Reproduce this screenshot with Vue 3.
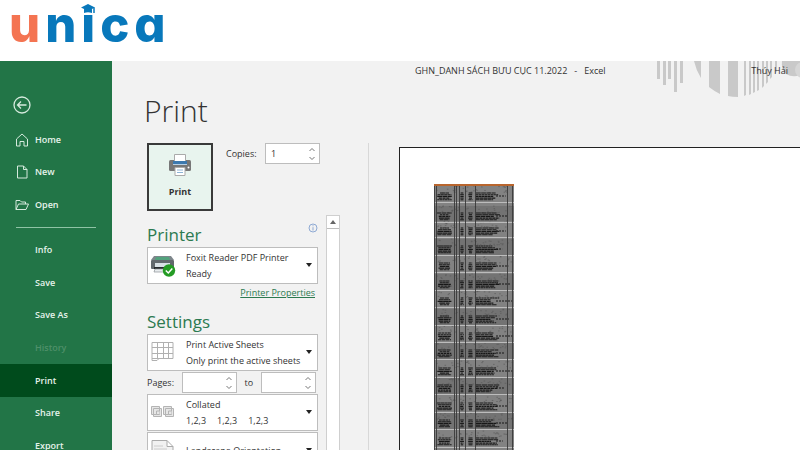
<script setup>
import { ref } from 'vue'

const copies = ref('1')
const fromPage = ref('')
const toPage = ref('')

const topLinks = [
  { label: 'Home', icon: 'M1.5 6 7 1l5.500 5v7H9V8.500H5V13H1.500z' },
  { label: 'New', icon: 'M2.500 1h6l3.500 3.500V13H2.500zM8.500 1v3.500H12' },
  { label: 'Open', icon: 'M1 11.500V2.500h4l1.500 1.500h4V6M1 11.500 3.500 6H13.500l-2.500 5.500z' },
]
const links = ['Info', 'Save', 'Save As', 'History', 'Print', 'Share', 'Export']

// Deterministic noise for the miniature sheet preview.
let seed = 7
const rand = () => (seed = (seed * 16807) % 2147483647) / 2147483647

const bands = [18, 38, 53, 71, 88, 106, 123, 141, 158, 175, 193, 210, 228, 245, 263]
const columns = [
  { x: 3, w: 15 },
  { x: 26, w: 4 },
  { x: 34, w: 5 },
  { x: 42, w: 24 },
]
const marks = []
const specks = []
for (const y of bands) {
  for (let line = 0; line < 5; line++) {
    for (const c of columns) {
      const w = c.w * (0.6 + rand() * 0.4)
      const x = c.w > 20 ? c.x : c.x + (c.w - w) / 2
      marks.push({ x, y: y - 9 + line * 1.7, w, dash: `${2 + rand() * 4} ${0.2 + rand() * 0.4}` })
    }
  }
  marks.push({ x: 62, y: y - 6, w: 6 + rand() * 11, dash: '2 1' })
  for (let i = 0; i < 32; i++) specks.push({ x: 2 + rand() * 76, y: y - 16 + rand() * 7 })
}
</script>

<template>
  <div class="page">
    <header class="brand">
      <a class="logo" href="#" aria-label="unica">
        <span class="warm">u</span><span>n</span><span class="capped">i<svg class="cap" width="14" height="11" viewBox="0 0 14 11" aria-hidden="true">
          <rect width="14" height="11" fill="#fff" />
          <path d="M0 3.500 7 0l7 3.500L7 7zM3 5 7 7l4-2v4Q7 7.500 3 9z" fill="#0878bb" />
          <path d="M13 3.500V9" stroke="#0878bb" stroke-width="1.500" />
        </svg></span><span>c</span><span>a</span>
      </a>
    </header>

    <div class="backstage">
      <nav class="sidebar">
        <button class="back" aria-label="Back">
          <svg width="18" height="18" viewBox="0 0 18 18"><circle cx="9" cy="9" r="8" /><path d="M13.500 9h-9M8 5.500 4.500 9 8 12.500" /></svg>
        </button>
        <div class="top-links">
          <a v-for="l in topLinks" :key="l.label" href="#">
            <svg width="14" height="14" viewBox="0 0 14 14"><path :d="l.icon" /></svg>{{ l.label }}
          </a>
        </div>
        <hr />
        <div class="links">
          <a v-for="l in links" :key="l" href="#" :class="{ active: l === 'Print', muted: l === 'History' }">{{ l }}</a>
        </div>
      </nav>

      <main class="main">
        <svg class="ornament" width="150" height="40" viewBox="0 0 150 40" aria-hidden="true">
          <g fill="#c9c9c9">
            <path d="M7 0h3v18H7zM13 0h3v24h-3zM18 0h3v18h-3zM24 0h3v31h-3zM30 0h3v22h-3z" />
            <path d="M44 0h7v17Q46 9 44 0zM59 0h11v33Q64 30 59 26zM78 0h10v36Q82 36 78 35z" />
            <path d="M94 0h2v34l-2 1zM99 0h2v33l-2 1zM103 0h2v31l-2 1zM107 0h2v29l-2 1zM112 0h2v25l-2 2zM116 0h2v21l-2 2zM120 0h2v16l-2 2zM125 0h2v10l-2 3z" />
            <path d="M132 0h18v14Q143 17 136 13 131 8 132 0z" />
          </g>
          <circle cx="153" cy="9" r="8" fill="#d6d6d6" />
        </svg>
        <div class="titlebar">
          <span class="doc"><span>GHN_DANH SÁCH BƯU CỤC 11.2022</span><span>-</span><span>Excel</span></span>
          <span class="user">Thúy Hải</span>
        </div>
        <h1>Print</h1>

        <div class="work">
          <section class="options">
            <div class="print-row">
              <button class="print">
                <svg width="24" height="22" viewBox="0 0 24 22" aria-hidden="true">
                  <rect x="1" y="6" width="22" height="11" rx="1.500" fill="#777" />
                  <path d="M6.500.5h11V9h-11z" fill="#fff" stroke="#aaa" />
                  <path d="M5 7h14v4H5z" fill="#3c78ae" />
                  <path d="M5 10.500h14" stroke="#b9d0e5" />
                  <path d="M7 13.500h10v8H7z" fill="#fff" stroke="#aaa" />
                  <path d="M9 16h6M9 18.500h6" stroke="#8db4d5" />
                  <circle cx="20.500" cy="13.500" r="1" fill="#fff" />
                </svg>
                Print
              </button>
              <label class="copies" for="copies">Copies:</label>
              <span class="spin"><input id="copies" v-model="copies" /><svg width="8" height="14" viewBox="0 0 8 14"><path d="M1.500 4 4 1.500 6.500 4M1.500 10 4 12.500 6.500 10" /></svg></span>
            </div>

            <div class="settings">
              <div class="fields">
                <div class="heading-row">
                  <h2>Printer</h2>
                  <svg class="info" width="10" height="10" viewBox="0 0 10 10" aria-hidden="true"><circle cx="5" cy="5" r="4" /><path d="M5 4.200V7.500M5 2.300v1" /></svg>
                </div>
                <div class="combo">
                  <select aria-label="Printer"><option>Foxit Reader PDF Printer</option></select>
                  <svg class="glyph" width="26" height="24" viewBox="0 0 26 24" aria-hidden="true">
                    <path d="M4 3h17l3 4H1z" fill="#7d868b" />
                    <path d="M6 4h13l1 3H5z" fill="#53a27d" />
                    <rect x="1" y="7" width="23" height="9" rx="1" fill="#62686d" />
                    <path d="M5 10h15v4H5z" fill="#d8e0e5" />
                    <path d="M4 14h15v2H4z" fill="#25292c" />
                    <path d="M5 16h13v3H4z" fill="#e8ecee" stroke="#8b9195" stroke-width=".7" />
                    <circle cx="19" cy="17.500" r="6.200" fill="#249b24" />
                    <path d="m15.800 17.500 2.500 2.500 4-4.500" fill="none" stroke="#fff" stroke-width="1.500" />
                  </svg>
                  <span class="detail">Ready</span>
                  <i class="arrow"></i>
                </div>
                <a class="properties" href="#">Printer Properties</a>

                <h2 class="settings-title">Settings</h2>
                <div class="combo">
                  <select aria-label="What to print"><option>Print Active Sheets</option></select>
                  <svg class="glyph" width="26" height="24" viewBox="0 0 26 24" aria-hidden="true">
                    <path d="M2 2.500h21v16H9l-2 2H2zM2 7.500h21M2 13.500h21M7.500 2.500v16M13.500 2.500v16M18.500 2.500v16M2 18.500h7" fill="#fff" stroke="#b0b0b0" />
                  </svg>
                  <span class="detail">Only print the active sheets</span>
                  <i class="arrow"></i>
                </div>
                <div class="pages">
                  <label for="from-page">Pages:</label>
                  <span class="spin"><input id="from-page" v-model="fromPage" /><svg width="8" height="14" viewBox="0 0 8 14"><path d="M1.500 4 4 1.500 6.500 4M1.500 10 4 12.500 6.500 10" /></svg></span>
                  <label for="to-page">to</label>
                  <span class="spin"><input id="to-page" v-model="toPage" /><svg width="8" height="14" viewBox="0 0 8 14"><path d="M1.500 4 4 1.500 6.500 4M1.500 10 4 12.500 6.500 10" /></svg></span>
                </div>
                <div class="combo">
                  <select aria-label="Collation"><option>Collated</option></select>
                  <svg class="glyph" width="26" height="24" viewBox="0 0 26 24" aria-hidden="true">
                    <g fill="#e6e6e6" stroke="#b4b4b4">
                      <path d="M1.500 6.500h8v8h-8zM3.500 8.500h8v8h-8zM13.500 6.500h8v8h-8zM15.500 8.500h8v8h-8z" />
                      <path d="M9.500 11h-3v3.500h3M21.500 11h-3v3.500h3" />
                    </g>
                  </svg>
                  <span class="detail runs"><span>1,2,3</span><span>1,2,3</span><span>1,2,3</span></span>
                  <i class="arrow"></i>
                </div>
                <div class="combo single">
                  <select aria-label="Orientation"><option>Landscape Orientation</option></select>
                  <svg class="glyph" width="26" height="24" viewBox="0 0 26 24" aria-hidden="true">
                    <path d="M2 2.500h15l6 6V22H2zM17 2.500v6h6" fill="#f1f1f1" stroke="#aaa" />
                    <path d="M4 8h9M4 11h13M4 14h15" stroke="#ccc" />
                  </svg>
                  <i class="arrow"></i>
                </div>
              </div>
              <div class="scroll"><button aria-label="Scroll up"><i></i></button></div>
            </div>
          </section>

          <section class="preview">
            <svg class="sheet" width="80" height="266" viewBox="0 0 80 266" role="img" aria-label="Sheet preview">
              <rect width="80" height="266" fill="#828282" />
              <rect v-for="(y, i) in bands" :key="'b' + y" x="0" :y="y - 16" width="80" height="16" :fill="i % 2 ? '#737373' : '#828282'" />
              <path v-for="(s, i) in specks" :key="'s' + i" :d="`M${s.x} ${s.y}h1.500`" stroke="#555" stroke-width=".6" />
              <path v-for="(m, i) in marks" :key="'m' + i" :d="`M${m.x} ${m.y}h${m.w}`" stroke="#181818" stroke-width="1.100" :stroke-dasharray="m.dash" />
              <path v-for="y in bands" :key="'l' + y" :d="`M0 ${y}.500h80`" stroke="#ccc" stroke-width=".8" />
              <path d="M.5 0v266M2.500 0v266M20.500 0v266M22.500 0v266M25.500 0v266M31.500 0v266M41.500 0v266M73.500 0v266M78.500 0v266" stroke="#393939" stroke-width=".9" />
              <rect width="80" height="2" fill="#b8652d" />
            </svg>
          </section>
        </div>
      </main>
    </div>
  </div>
</template>

<style>
body {
  margin: 0;
  background: #fff;
}
</style>

<style scoped>
* {
  box-sizing: border-box;
}
.page {
  height: 100vh;
  overflow: hidden;
  display: flex;
  flex-direction: column;
  font: 9px/16px "Open Sans", "Noto Sans", sans-serif;
  color: #333;
}
button,
input,
select {
  font: inherit;
  color: inherit;
  margin: 0;
  padding: 0;
  border-radius: 0;
}
a {
  color: inherit;
  text-decoration: none;
}
.brand {
  flex: none;
  height: 61px;
  padding-left: 9px;
}
.logo {
  display: inline-flex;
  gap: 5px;
  font: 800 49px/50px Inter, sans-serif;
  font-feature-settings: "cv11";
  color: #0878bb;
}
.logo .warm {
  color: #f47452;
}
.capped {
  position: relative;
}
.cap {
  position: absolute;
  top: 4px;
  left: 0;
}
.backstage {
  flex: 1;
  min-height: 0;
  display: flex;
}
.sidebar {
  flex: none;
  width: 112px;
  padding-top: 35px;
  background: #227547;
  color: #e6f3eb;
  font-weight: 600;
}
.sidebar svg {
  fill: none;
  stroke: #d5eadd;
}
.back {
  display: block;
  height: 18px;
  margin-left: 13px;
  border: 0;
  background: none;
}
.back svg {
  display: block;
  stroke-width: 1.3;
}
.top-links {
  height: 97px;
  margin-top: 10px;
  display: grid;
}
.top-links a {
  display: flex;
  align-items: center;
  gap: 6px;
  padding-left: 15px;
}
hr {
  margin: 6px 16px;
  border: 0;
  border-top: 1px solid #8fc3a5;
}
.links {
  height: 228px;
  display: grid;
}
.links a {
  display: flex;
  align-items: center;
  padding-left: 35px;
}
.links .active {
  background: #004b1c;
}
.links .muted {
  color: #4e9069;
}
.main {
  position: relative;
  flex: 1;
  min-width: 0;
  display: flex;
  flex-direction: column;
  background: #f2f2f2;
}
.ornament {
  position: absolute;
  top: 0;
  right: 0;
}
.titlebar {
  position: relative;
  display: grid;
  grid-template-columns: 1fr auto;
  padding: 2px 12px 0 303px;
}
.doc {
  display: flex;
  gap: 7px;
}
h1 {
  margin: 7px 0 0 32px;
  font-size: 30px;
  font-weight: 300;
  line-height: 50px;
}
.work {
  flex: 1;
  min-height: 0;
  display: flex;
  margin-top: 7px;
}
.options {
  flex: none;
  width: 257px;
  padding-left: 35px;
  border-right: 1px solid #d8d8d8;
}
.print-row {
  display: flex;
  align-items: flex-start;
}
.print {
  width: 66px;
  height: 68px;
  display: flex;
  flex-direction: column;
  align-items: center;
  gap: 8px;
  padding-top: 9px;
  border: 2px solid #3a3a3a;
  background: #e8f4ee;
  font-weight: 700;
}
.copies {
  width: 39px;
  margin: 3px 0 0 13px;
}
.spin {
  width: 55px;
  height: 21px;
  display: flex;
  align-items: center;
  padding: 0 3px 0 5px;
  border: 1px solid #bdbdbd;
  background: #fff;
}
.spin input {
  flex: 1;
  min-width: 0;
  border: 0;
  outline: 0;
  background: none;
}
.spin svg {
  flex: none;
  fill: none;
  stroke: #777;
}
.settings {
  display: flex;
  gap: 8px;
  margin-top: 4px;
}
.fields {
  width: 171px;
  display: flex;
  flex-direction: column;
}
.heading-row {
  display: flex;
  justify-content: space-between;
  padding-top: 8px;
}
h2 {
  margin: 0;
  font-size: 17px;
  font-weight: 400;
  line-height: 24px;
  color: #2c7a50;
}
.info {
  fill: none;
  stroke: #8faad4;
}
.combo {
  flex: none;
  position: relative;
  height: 37px;
}
.combo select {
  width: 100%;
  height: 100%;
  padding: 0 20px 16px 38px;
  border: 1px solid #bdbdbd;
  appearance: none;
  background: #fff;
}
.combo.single select {
  padding-bottom: 0;
}
.glyph {
  position: absolute;
  top: 6px;
  left: 3px;
  pointer-events: none;
}
.detail {
  position: absolute;
  top: 19px;
  left: 39px;
  pointer-events: none;
  white-space: nowrap;
}
.runs {
  display: flex;
  gap: 11px;
}
.arrow {
  position: absolute;
  top: 16px;
  right: 6px;
  border: 3px solid transparent;
  border-top: 4px solid #222;
  border-bottom: 0;
  pointer-events: none;
}
.properties {
  align-self: flex-end;
  margin: 1px 3px 0 0;
  color: #2c7a50;
  text-decoration: underline;
}
.settings-title {
  margin: 9px 0 0;
}
.pages {
  display: flex;
  justify-content: space-between;
  align-items: center;
  padding: 1px 2px 1px 0;
}
.combo.single {
  margin-top: 1px;
}
.scroll {
  width: 14px;
  height: 260px;
  border: 1px solid #cfcfcf;
  background: #fff;
}
.scroll button {
  width: 12px;
  height: 13px;
  display: grid;
  place-items: center;
  border: 0;
  border-bottom: 1px solid #bdbdbd;
  background: #fff;
}
.scroll i {
  border: 3px solid transparent;
  border-bottom: 4px solid #666;
  border-top: 0;
}
.preview {
  flex: 1;
  margin: 4px 0 0 30px;
  padding: 36px 0 0 34px;
  border: solid #222;
  border-width: 1px 0 0 1px;
  background: #fff;
}
.sheet {
  display: block;
}
</style>
